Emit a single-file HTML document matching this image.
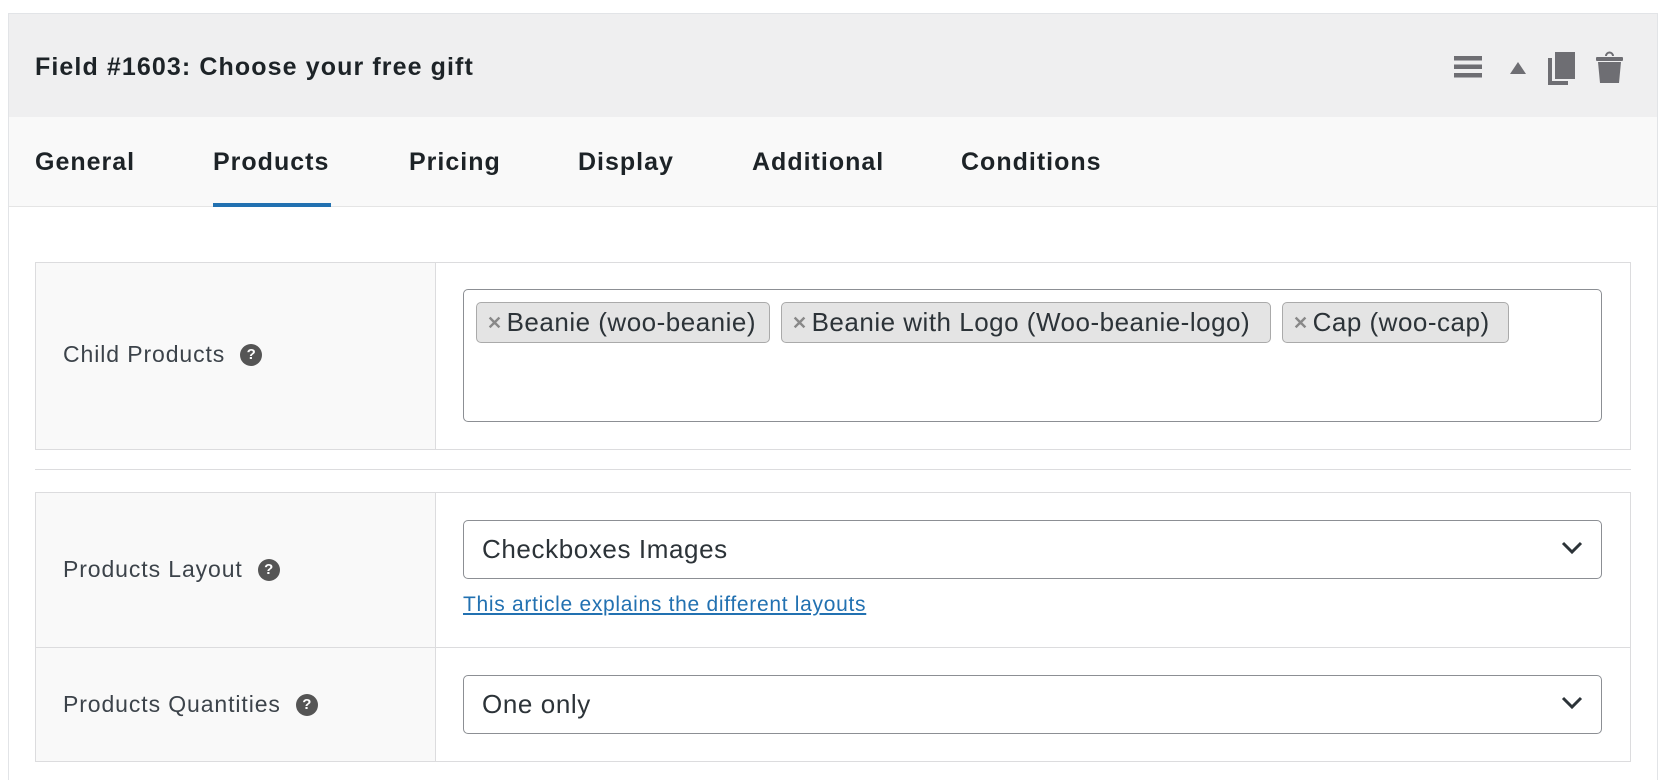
<!DOCTYPE html>
<html style="height:780px;overflow:hidden"><head><meta charset="utf-8"><style>
*{box-sizing:border-box;margin:0;padding:0}
body{width:1674px;height:780px;background:#fff;font-family:"Liberation Sans",Arial,sans-serif;position:relative;overflow:hidden;color:#1d2327}
.abs{position:absolute}
.panel{left:8px;top:13px;width:1650px;height:767px;border:1px solid #e2e4e7;border-bottom:none;background:#fff}
.head{left:9px;top:14px;width:1648px;height:103px;background:#efeff0}
.tabs{left:9px;top:117px;width:1648px;height:90px;background:#f9f9f9;border-bottom:1px solid #e5e5e5}
.title{left:35px;top:53px;font-size:25px;letter-spacing:1.1px;font-weight:bold;color:#1d2327}
.tab{top:148px;font-size:25px;letter-spacing:1px;font-weight:bold;color:#1d2327}
.ul{left:213px;top:203px;width:118px;height:4px;background:#2271b1}
.tbl{border:1px solid #dcdcde;background:#fff}
.lab{background:#f9f9f9;border-right:1px solid #dcdcde}
.lt{font-size:23px;letter-spacing:0.9px;color:#3c434a;display:flex;align-items:center}
.help{display:inline-block;margin-left:15px;width:22px;height:22px;border-radius:50%;background:#555;color:#fff;font-size:15px;letter-spacing:0;font-weight:bold;text-align:center;line-height:22px}
.box{border:1px solid #8c8f94;border-radius:5px;background:#fff}
.tok{top:302px;height:41px;background:#e4e4e4;border:1px solid #aaa;border-radius:5px;font-size:26px;letter-spacing:0.5px;color:#2c3338;line-height:39px;padding-left:10px;white-space:nowrap;overflow:hidden}
.tok b{color:#888;font-size:18px;margin-right:4px;position:relative;top:-2px}
.sel{font-size:26px;letter-spacing:0.6px;color:#2c3338;line-height:56px;padding-left:18px}
.chev{right:18px;top:20px}
</style></head><body>
<div class="abs panel"></div>
<div class="abs head"></div>
<div class="abs title">Field #1603: Choose your free gift</div>
<svg class="abs" style="left:1453px;top:55px" width="30" height="24" viewBox="0 0 30 24"><rect x="1" y="1" width="28" height="4.5" fill="#6e6e73"/><rect x="1" y="9.5" width="28" height="4.5" fill="#6e6e73"/><rect x="1" y="18" width="28" height="4.5" fill="#6e6e73"/></svg>
<svg class="abs" style="left:1509px;top:61px" width="18" height="14"><path d="M9 1 L17 13 L1 13Z" fill="#6e6e73"/></svg>
<svg class="abs" style="left:1548px;top:52px" width="28" height="33"><rect x="7" y="0" width="20" height="27" fill="#6e6e73"/><path d="M0 6 H4 V29 H20 V33 H0Z" fill="#6e6e73"/></svg>
<svg class="abs" style="left:1596px;top:51px" width="27" height="33"><path d="M10 5 A3.5 3.5 0 0 1 17 5" stroke="#6e6e73" stroke-width="2" fill="none"/><rect x="0" y="6" width="27" height="4" rx="1" fill="#6e6e73"/><path d="M2 11 H25 L23 32 H4Z" fill="#6e6e73"/></svg>
<div class="abs tabs"></div>
<div class="abs tab" style="left:35px">General</div>
<div class="abs tab" style="left:213px">Products</div>
<div class="abs tab" style="left:409px">Pricing</div>
<div class="abs tab" style="left:578px">Display</div>
<div class="abs tab" style="left:752px">Additional</div>
<div class="abs tab" style="left:961px">Conditions</div>
<div class="abs ul"></div>

<div class="abs tbl" style="left:35px;top:262px;width:1596px;height:188px"></div>
<div class="abs lab" style="left:36px;top:263px;width:400px;height:186px"></div>
<div class="abs lt" style="left:63px;top:341px">Child Products<span class="help">?</span></div>
<div class="abs box" style="left:463px;top:289px;width:1139px;height:133px"></div>
<div class="abs tok" style="left:476px;width:294px"><b>✕</b>Beanie (woo-beanie)</div>
<div class="abs tok" style="left:781px;width:490px"><b>✕</b>Beanie with Logo (Woo-beanie-logo)</div>
<div class="abs tok" style="left:1282px;width:227px"><b>✕</b>Cap (woo-cap)</div>

<div class="abs" style="left:35px;top:469px;width:1596px;height:1px;background:#dcdcde"></div>

<div class="abs tbl" style="left:35px;top:492px;width:1596px;height:270px"></div>
<div class="abs lab" style="left:36px;top:493px;width:400px;height:268px"></div>
<div class="abs" style="left:36px;top:647px;width:1594px;height:1px;background:#dcdcde"></div>
<div class="abs lt" style="left:63px;top:556px">Products Layout<span class="help">?</span></div>
<div class="abs lt" style="left:63px;top:691px">Products Quantities<span class="help">?</span></div>
<div class="abs box sel" style="left:463px;top:520px;width:1139px;height:59px">Checkboxes Images<svg class="abs chev" width="22" height="14"><path d="M2 2 L11 11 L20 2" stroke="#2c3338" stroke-width="3" fill="none"/></svg></div>
<div class="abs" style="left:463px;top:593px;font-size:21px;letter-spacing:0.7px;color:#2271b1;text-decoration:underline">This article explains the different layouts</div>
<div class="abs box sel" style="left:463px;top:675px;width:1139px;height:59px">One only<svg class="abs chev" width="22" height="14"><path d="M2 2 L11 11 L20 2" stroke="#2c3338" stroke-width="3" fill="none"/></svg></div>
</body></html>
